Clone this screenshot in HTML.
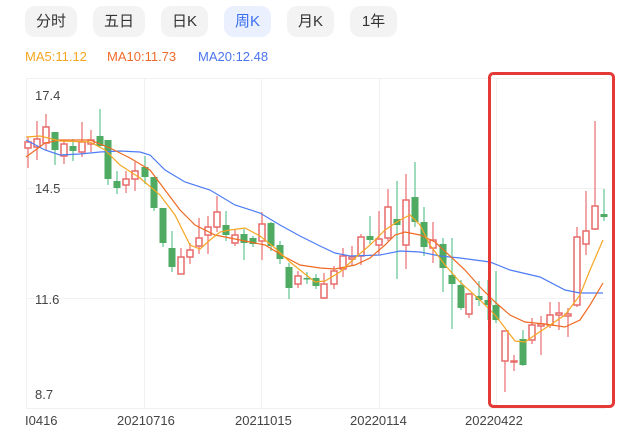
<!DOCTYPE html>
<html><head><meta charset="utf-8"><style>
body{margin:0;width:618px;height:439px;background:#fff;font-family:"Liberation Sans","Noto Sans CJK SC",sans-serif;position:relative;overflow:hidden}
.tab{position:absolute;top:6px;height:31px;width:52px;background:#f3f3f3;border-radius:10px;font-size:15px;color:#333;text-align:center;line-height:31px}
.tab.a{background:#eaf0fe;color:#3a6ff0}
.ma{position:absolute;top:49px;font-size:13px}
svg{position:absolute;left:0;top:0}
</style></head><body>
<div class="tab" style="left:25px">分时</div>
<div class="tab" style="left:93px">五日</div>
<div class="tab" style="left:161px;width:47px">日K</div>
<div class="tab a" style="left:224px;width:47px">周K</div>
<div class="tab" style="left:287px;width:47px">月K</div>
<div class="tab" style="left:350px;width:47px">1年</div>
<div class="ma" style="left:25px;color:#f5a623">MA5:11.12</div>
<div class="ma" style="left:107px;color:#f06a2a">MA10:11.73</div>
<div class="ma" style="left:198px;color:#4a74ee">MA20:12.48</div>
<svg id="s" width="618" height="439" font-family="Liberation Sans, sans-serif">
<g stroke="#f1f1f1" stroke-width="1">
<line x1="26" y1="78.5" x2="605" y2="78.5"/><line x1="26" y1="188.5" x2="605" y2="188.5"/><line x1="26" y1="298.5" x2="605" y2="298.5"/><line x1="26" y1="408.5" x2="605" y2="408.5"/>
<line x1="26.5" y1="78" x2="26.5" y2="408"/><line x1="144.5" y1="78" x2="144.5" y2="408"/><line x1="261.5" y1="78" x2="261.5" y2="408"/><line x1="379.5" y1="78" x2="379.5" y2="408"/><line x1="496.5" y1="78" x2="496.5" y2="408"/>
</g>
<g font-size="13" fill="#444">
<text x="35" y="100">17.4</text><text x="35" y="193">14.5</text><text x="35" y="304">11.6</text><text x="35" y="399">8.7</text>
<text x="25" y="425">I0416</text><text x="117" y="425">20210716</text><text x="235" y="425">20211015</text><text x="350" y="425">20220114</text><text x="465" y="425">20220422</text>
</g>
<g id="c"></g>
<g fill="none" stroke-width="1.2">
<polyline stroke="#4d7cf5" points="26,140 45,150 60,155 80,154 100,152 120,151 140,152 150,155 165,170 185,182 210,190 235,205 260,213 280,225 300,236 320,246 335,253 350,256 380,255 400,251 420,252 440,256 460,258 490,262 510,270 540,277 565,290 580,293 603,293"/>
<polyline stroke="#f06a22" points="26,157 45,143 60,140 90,140 110,148 130,158 150,170 165,190 180,210 195,225 215,235 240,240 265,245 285,257 300,265 320,268 335,269 355,265 370,258 385,245 395,235 405,232 420,235 435,242 450,256 465,270 480,287 495,302 510,315 525,322 545,324 565,327 580,320 590,305 603,283"/>
<polyline stroke="#f5a623" points="26,137 40,136 60,141 90,142 105,150 120,165 140,178 160,195 175,215 190,245 200,249 210,240 220,232 230,230 245,228 260,236 275,248 290,262 300,270 315,282 325,281 340,272 355,258 370,245 385,230 400,220 410,215 420,225 430,245 445,265 460,282 480,300 495,315 505,328 515,341 525,342 535,335 550,325 565,315 580,295 590,270 603,240"/>
</g>
<rect x="489.5" y="73.5" width="124" height="333" rx="4" fill="none" stroke="#e53935" stroke-width="3"/>
</svg>
<script>
var d=[[28,142,148,137,168,'r'],[37,139,147,121,160,'r'],[46,127,143,114,150,'r'],[55,132,150,132,165,'g'],[64,144,156,140,164,'r'],[73,146,151,139,161,'g'],[82,142,152,122,157,'r'],[91,140,144,130,152,'r'],[100,136,146,109,147,'g'],[108,140,179,140,185,'g'],[117,181,188,171,194,'g'],[126,179,185,171,193,'r'],[135,171,179,162,191,'r'],[145,167,177,156,184,'g'],[154,177,208,177,211,'g'],[163,208,243,208,247,'g'],[172,248,267,231,272,'g'],[181,257,274,248,274,'r'],[190,250,257,243,264,'r'],[199,238,246,218,254,'r'],[208,227,235,216,254,'r'],[217,212,227,196,232,'r'],[226,225,235,211,241,'g'],[235,235,243,229,246,'r'],[244,234,243,229,260,'g'],[253,238,244,236,247,'g'],[262,224,241,212,260,'r'],[271,223,246,222,251,'g'],[280,245,259,241,264,'g'],[289,267,288,263,299,'g'],[298,276,284,271,288,'r'],[307,278,279,272,284,'g'],[316,278,286,274,289,'g'],[324,284,298,273,299,'r'],[334,271,284,266,289,'r'],[343,256,269,248,277,'r'],[352,257,259,246,266,'r'],[361,237,256,234,265,'r'],[370,236,240,216,244,'g'],[379,239,245,211,255,'r'],[388,207,238,189,241,'r'],[397,219,225,181,279,'g'],[406,200,245,174,269,'r'],[415,197,222,162,227,'g'],[424,222,247,207,256,'g'],[433,240,248,222,263,'r'],[443,244,268,238,292,'g'],[452,275,284,238,329,'g'],[461,285,308,280,310,'g'],[469,294,314,293,318,'r'],[479,296,300,281,306,'g'],[488,300,305,280,320,'g'],[496,305,320,271,323,'g'],[505,331,361,331,392,'r'],[514,361,362,355,371,'r'],[523,339,365,330,366,'g'],[532,325,340,318,344,'r'],[541,324,326,316,355,'r'],[550,315,325,302,328,'r'],[559,313,315,302,330,'r'],[568,314,316,308,337,'r'],[577,237,305,227,307,'r'],[586,231,244,191,255,'r'],[595,206,229,121,230,'r'],[604,214,217,189,221,'g']];
var h='';d.forEach(function(c){var x=c[0],col=c[5]=='r'?'#ee8a8a':'#7fd0a8';
h+='<line x1="'+x+'" y1="'+c[3]+'" x2="'+x+'" y2="'+c[4]+'" stroke="'+col+'" stroke-width="1.5"/>';
if(c[5]=='r')h+='<rect x="'+(x-3)+'" y="'+c[1]+'" width="6" height="'+Math.max(c[2]-c[1],1)+'" fill="#fff" stroke="#e86a6a" stroke-width="1.5"/>';
else h+='<rect x="'+(x-3.5)+'" y="'+c[1]+'" width="7" height="'+Math.max(c[2]-c[1],1.5)+'" fill="#4faa62"/>';});
document.getElementById('c').innerHTML=h;
</script>
</body></html>
